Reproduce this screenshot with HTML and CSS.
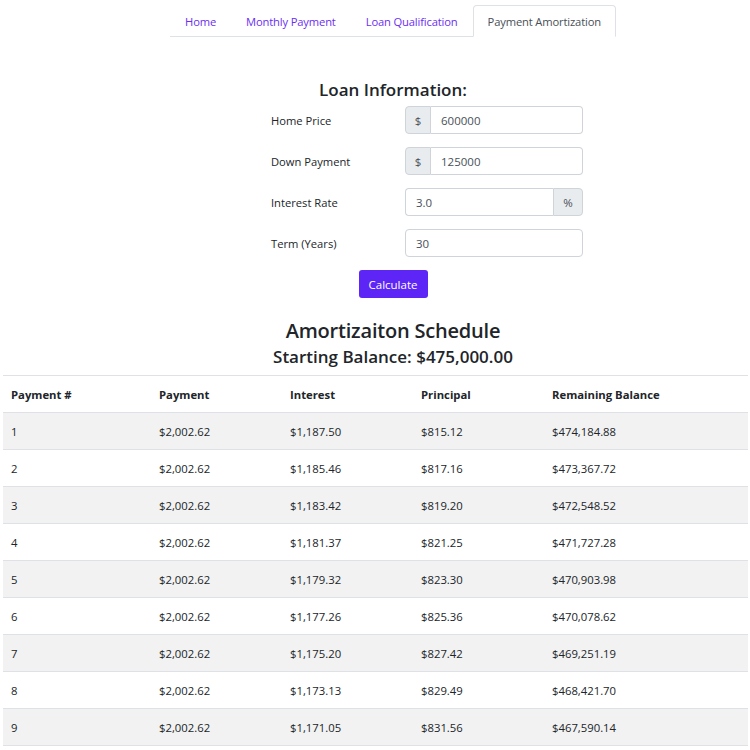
FILE: index.html
```html
<!DOCTYPE html>
<html>
<head>
<meta charset="utf-8">
<link rel="stylesheet" href="styles.css">
</head>
<body>
<div class="top">
  <ul class="tabs">
    <li class="tab"><a class="tab-link">Home</a></li>
    <li class="tab"><a class="tab-link">Monthly Payment</a></li>
    <li class="tab"><a class="tab-link">Loan Qualification</a></li>
    <li class="tab"><a class="tab-link active">Payment Amortization</a></li>
  </ul>

  <h2 class="form-title">Loan Information:</h2>
  <div class="form">
    <div class="form-row">
      <label class="label">Home Price</label>
      <div class="group"><span class="addon addon-left">$</span><input class="input" value="600000"></div>
    </div>
    <div class="form-row">
      <label class="label">Down Payment</label>
      <div class="group"><span class="addon addon-left">$</span><input class="input" value="125000"></div>
    </div>
    <div class="form-row">
      <label class="label">Interest Rate</label>
      <div class="group"><input class="input input-left" value="3.0"><span class="addon addon-right">%</span></div>
    </div>
    <div class="form-row">
      <label class="label">Term (Years)</label>
      <div class="group"><input class="input input-solo" value="30"></div>
    </div>
  </div>
  <button class="btn">Calculate</button>

  <h3 class="sched-title">Amortizaiton Schedule</h3>
  <h4 class="sched-sub">Starting Balance: $475,000.00</h4>
</div>

<table class="table">
  <thead>
    <tr><th class="c1">Payment #</th><th class="c2">Payment</th><th class="c3">Interest</th><th class="c4">Principal</th><th class="c5">Remaining Balance</th></tr>
  </thead>
  <tbody>
    <tr><td>1</td><td>$2,002.62</td><td>$1,187.50</td><td>$815.12</td><td>$474,184.88</td></tr>
    <tr><td>2</td><td>$2,002.62</td><td>$1,185.46</td><td>$817.16</td><td>$473,367.72</td></tr>
    <tr><td>3</td><td>$2,002.62</td><td>$1,183.42</td><td>$819.20</td><td>$472,548.52</td></tr>
    <tr><td>4</td><td>$2,002.62</td><td>$1,181.37</td><td>$821.25</td><td>$471,727.28</td></tr>
    <tr><td>5</td><td>$2,002.62</td><td>$1,179.32</td><td>$823.30</td><td>$470,903.98</td></tr>
    <tr><td>6</td><td>$2,002.62</td><td>$1,177.26</td><td>$825.36</td><td>$470,078.62</td></tr>
    <tr><td>7</td><td>$2,002.62</td><td>$1,175.20</td><td>$827.42</td><td>$469,251.19</td></tr>
    <tr><td>8</td><td>$2,002.62</td><td>$1,173.13</td><td>$829.49</td><td>$468,421.70</td></tr>
    <tr><td>9</td><td>$2,002.62</td><td>$1,171.05</td><td>$831.56</td><td>$467,590.14</td></tr>
  </tbody>
</table>
</body>
</html>
```

FILE: styles.css
```css
html, body {
  margin: 0;
  padding: 0;
  background: #fff;
  overflow: hidden;
}
body {
  font-family: "Open Sans", "Noto Sans", sans-serif;
  font-size: 11.5px;
  color: #212529;
}
.top {
  padding-left: 36px;
  display: flex;
  flex-direction: column;
  align-items: center;
}
.tabs {
  list-style: none;
  margin: 5px 0 0 0;
  padding: 0;
  display: flex;
  border-bottom: 1px solid #dee2e6;
}
.tab {
  margin-bottom: -1px;
}
.tab-link {
  display: block;
  padding: 0 14px;
  height: 30px;
  line-height: 31px;
  border: 1px solid transparent;
  border-top-left-radius: 4px;
  border-top-right-radius: 4px;
  color: #6a2ef4;
  font-size: 11.2px;
  letter-spacing: -0.15px;
}
.tab-link.active {
  color: #495057;
  background: #fff;
  border-color: #dee2e6 #dee2e6 #fff;
}
.form-title {
  margin: 42px 0 0 0;
  font-size: 17px;
  font-weight: 600;
  line-height: 22px;
}
.form {
  margin-top: 5px;
  display: flex;
  flex-direction: column;
  gap: 13px;
}
.form-row {
  width: 312px;
  margin-left: 68px;
  display: grid;
  grid-template-columns: 134px 178px;
  align-items: center;
}
.label {
  font-size: 11.2px;
  padding-top: 1px;
}
.group {
  display: flex;
  height: 28px;
}
.addon {
  background: #e9ecef;
  border: 1px solid #ced4da;
  color: #495057;
  display: flex;
  align-items: center;
  justify-content: center;
  font-size: 11.5px;
  box-sizing: border-box;
}
.addon-left {
  width: 26px;
  border-radius: 4px 0 0 4px;
}
.addon-right {
  width: 30px;
  border-radius: 0 4px 4px 0;
}
.input {
  flex: 1;
  min-width: 0;
  box-sizing: border-box;
  height: 28px;
  border: 1px solid #ced4da;
  border-left: none;
  border-radius: 0 4px 4px 0;
  padding: 0 10px;
  font-family: inherit;
  font-size: 11.5px;
  color: #495057;
  outline: none;
}
.input-left {
  border-left: 1px solid #ced4da;
  border-right: none;
  border-radius: 4px 0 0 4px;
}
.input-solo {
  border-left: 1px solid #ced4da;
  border-radius: 4px;
}
.btn {
  margin-top: 13px;
  height: 28px;
  width: 69px;
  padding: 0;
  border: none;
  border-radius: 3px;
  background: #5d25f6;
  color: #fff;
  font-family: inherit;
  font-size: 11.5px;
}
.sched-title {
  margin: 20px 0 0 0;
  font-size: 20px;
  font-weight: 600;
  line-height: 26px;
  letter-spacing: -0.2px;
}
.sched-sub {
  margin: 2px 0 0 0;
  font-size: 17px;
  font-weight: 600;
  line-height: 22px;
}
.table {
  margin: 7px 2px 0 3px;
  width: calc(100% - 5px);
  border-collapse: collapse;
  font-size: 11.3px;
  border-bottom: 1px solid #dee2e6;
}
.table th, .table td {
  text-align: left;
  padding: 0 8px;
  height: 36px;
  border-top: 1px solid #dee2e6;
  vertical-align: middle;
}
.table th {
  font-weight: 700;
}
.table tbody tr:nth-child(odd) {
  background: #f2f2f2;
}
.c1 { width: 132px; }
.c2 { width: 115px; }
.c3 { width: 115px; }
.c4 { width: 115px; }
```
